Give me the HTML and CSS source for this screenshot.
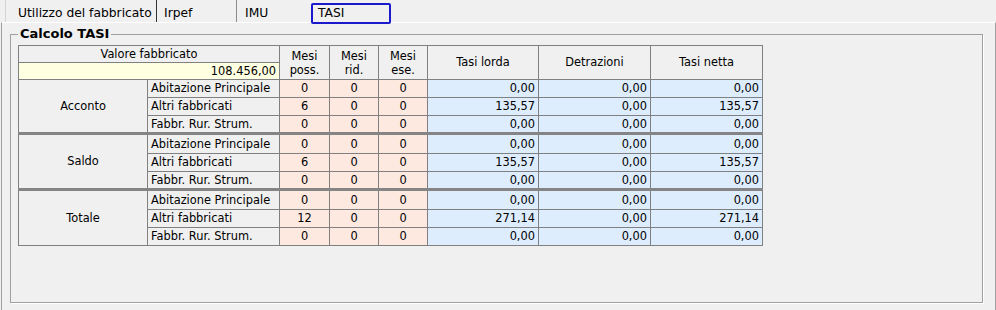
FILE: index.html
```html
<!DOCTYPE html>
<html lang="it">
<head>
<meta charset="utf-8">
<title>Calcolo TASI</title>
<link rel="stylesheet" href="styles.css">
</head>
<body>
<div class="tabs">
  <div class="tab tab-utilizzo">Utilizzo del fabbricato</div>
  <div class="tab tab-irpef">Irpef</div>
  <div class="tab tab-imu">IMU</div>
  <div class="tab tab-tasi"><span class="focus">TASI</span></div>
</div>
<div class="panel">
  <fieldset class="group">
    <legend>Calcolo TASI</legend>
    <table class="grid">
      <colgroup>
        <col class="c-lab"><col class="c-sub"><col class="c-m"><col class="c-m2"><col class="c-m2"><col class="c-v"><col class="c-v2"><col class="c-v2">
      </colgroup>
      <tr class="h1">
        <th colspan="2">Valore fabbricato</th>
        <th rowspan="2" class="two">Mesi<br>poss.</th>
        <th rowspan="2" class="two">Mesi<br>rid.</th>
        <th rowspan="2" class="two">Mesi<br>ese.</th>
        <th rowspan="2">Tasi lorda</th>
        <th rowspan="2">Detrazioni</th>
        <th rowspan="2">Tasi netta</th>
      </tr>
      <tr class="h2">
        <td colspan="2" class="valore">108.456,00</td>
      </tr>

      <tr class="r">
        <td rowspan="3" class="lab">Acconto</td>
        <td class="sub">Abitazione Principale</td>
        <td class="m">0</td><td class="m">0</td><td class="m">0</td>
        <td class="v">0,00</td><td class="v">0,00</td><td class="v">0,00</td>
      </tr>
      <tr class="r">
        <td class="sub">Altri fabbricati</td>
        <td class="m">6</td><td class="m">0</td><td class="m">0</td>
        <td class="v">135,57</td><td class="v">0,00</td><td class="v">135,57</td>
      </tr>
      <tr class="r">
        <td class="sub">Fabbr. Rur. Strum.</td>
        <td class="m">0</td><td class="m">0</td><td class="m">0</td>
        <td class="v">0,00</td><td class="v">0,00</td><td class="v">0,00</td>
      </tr>

      <tr class="r first">
        <td rowspan="3" class="lab">Saldo</td>
        <td class="sub">Abitazione Principale</td>
        <td class="m">0</td><td class="m">0</td><td class="m">0</td>
        <td class="v">0,00</td><td class="v">0,00</td><td class="v">0,00</td>
      </tr>
      <tr class="r">
        <td class="sub">Altri fabbricati</td>
        <td class="m">6</td><td class="m">0</td><td class="m">0</td>
        <td class="v">135,57</td><td class="v">0,00</td><td class="v">135,57</td>
      </tr>
      <tr class="r">
        <td class="sub">Fabbr. Rur. Strum.</td>
        <td class="m">0</td><td class="m">0</td><td class="m">0</td>
        <td class="v">0,00</td><td class="v">0,00</td><td class="v">0,00</td>
      </tr>

      <tr class="r first">
        <td rowspan="3" class="lab">Totale</td>
        <td class="sub">Abitazione Principale</td>
        <td class="m">0</td><td class="m">0</td><td class="m">0</td>
        <td class="v">0,00</td><td class="v">0,00</td><td class="v">0,00</td>
      </tr>
      <tr class="r">
        <td class="sub">Altri fabbricati</td>
        <td class="m">12</td><td class="m">0</td><td class="m">0</td>
        <td class="v">271,14</td><td class="v">0,00</td><td class="v">271,14</td>
      </tr>
      <tr class="r">
        <td class="sub">Fabbr. Rur. Strum.</td>
        <td class="m">0</td><td class="m">0</td><td class="m">0</td>
        <td class="v">0,00</td><td class="v">0,00</td><td class="v">0,00</td>
      </tr>
    </table>
  </fieldset>
</div>
</body>
</html>
```

FILE: styles.css
```css
html, body {
  margin: 0;
  padding: 0;
}
body {
  width: 996px;
  height: 310px;
  overflow: hidden;
  background: #f0f0f0;
  font-family: "DejaVu Sans", Verdana, sans-serif;
  color: #000;
}

/* tab strip */
.tabs {
  display: flex;
  height: 22px;
  padding-left: 5px;
  box-sizing: border-box;
}
.tab {
  box-sizing: border-box;
  height: 22px;
  font-size: 12.3px;
  line-height: 14px;
  padding-top: 6px;
}
.tab-utilizzo {
  width: 152px;
  padding-left: 12px;
  border-left: 1px solid #d4d4d4;
  border-right: 1px solid #333;
}
.tab-irpef {
  width: 80px;
  padding-left: 7px;
  border-right: 1px solid #8c8c8c;
}
.tab-imu {
  width: 74px;
  padding-left: 8px;
}
.tab-tasi {
  width: 80px;
  padding-top: 3px;
}
.focus {
  display: block;
  box-sizing: border-box;
  width: 80px;
  height: 21px;
  border: 2px solid #1a1acc;
  border-radius: 2px;
  padding: 1px 0 0 5px;
  line-height: 14px;
}

/* panel */
.panel {
  box-sizing: border-box;
  margin-left: 1px;
  width: 995px;
  height: 288px;
  border-left: 1px solid #a0a0a0;
  border-top: 1px solid #ffffff;
  border-right: 1px solid #a0a0a0;
  padding: 4px 0 0 8px;
}

.group {
  box-sizing: border-box;
  margin: 0;
  width: 973px;
  height: 276px;
  border: 1px solid #a0a0a0;
  box-shadow: 1px 1px 0 #ffffff;
  padding: 4px 7px 0 7px;
}
.group legend {
  font-size: 13px;
  font-weight: bold;
  padding: 0 2px;
  line-height: 14px;
}

/* grid */
.grid {
  border-collapse: collapse;
  table-layout: fixed;
  width: 745px;
  font-size: 11.4px;
}
.c-lab { width: 129px; }
.c-sub { width: 132px; }
.c-m { width: 50px; }
.c-m2 { width: 49px; }
.c-v { width: 111px; }
.c-v2 { width: 112px; }

.grid th, .grid td {
  border: 1px solid #808080;
  padding: 0 3px;
  white-space: nowrap;
  overflow: hidden;
  line-height: 13px;
}
.grid th {
  font-weight: normal;
  text-align: center;
  background: #f0f0f0;
}
.grid .two {
  line-height: 14px;
  padding-top: 1px;
}
.h1 { height: 17px; }
.h2 { height: 17px; }
.valore {
  background: #ffffe1;
  text-align: right;
  padding-right: 2px;
}
.r { height: 18px; }
.r.first { height: 20px; }
.r.first td {
  border-top: 3px solid #858585;
}
.lab {
  text-align: center;
  background: #f0f0f0;
}
.sub {
  text-align: left;
  background: #f0f0f0;
}
.m {
  text-align: center;
  background: #fde9e0;
}
.v {
  text-align: right;
  background: #deedfd;
  padding-right: 2px;
}
```
